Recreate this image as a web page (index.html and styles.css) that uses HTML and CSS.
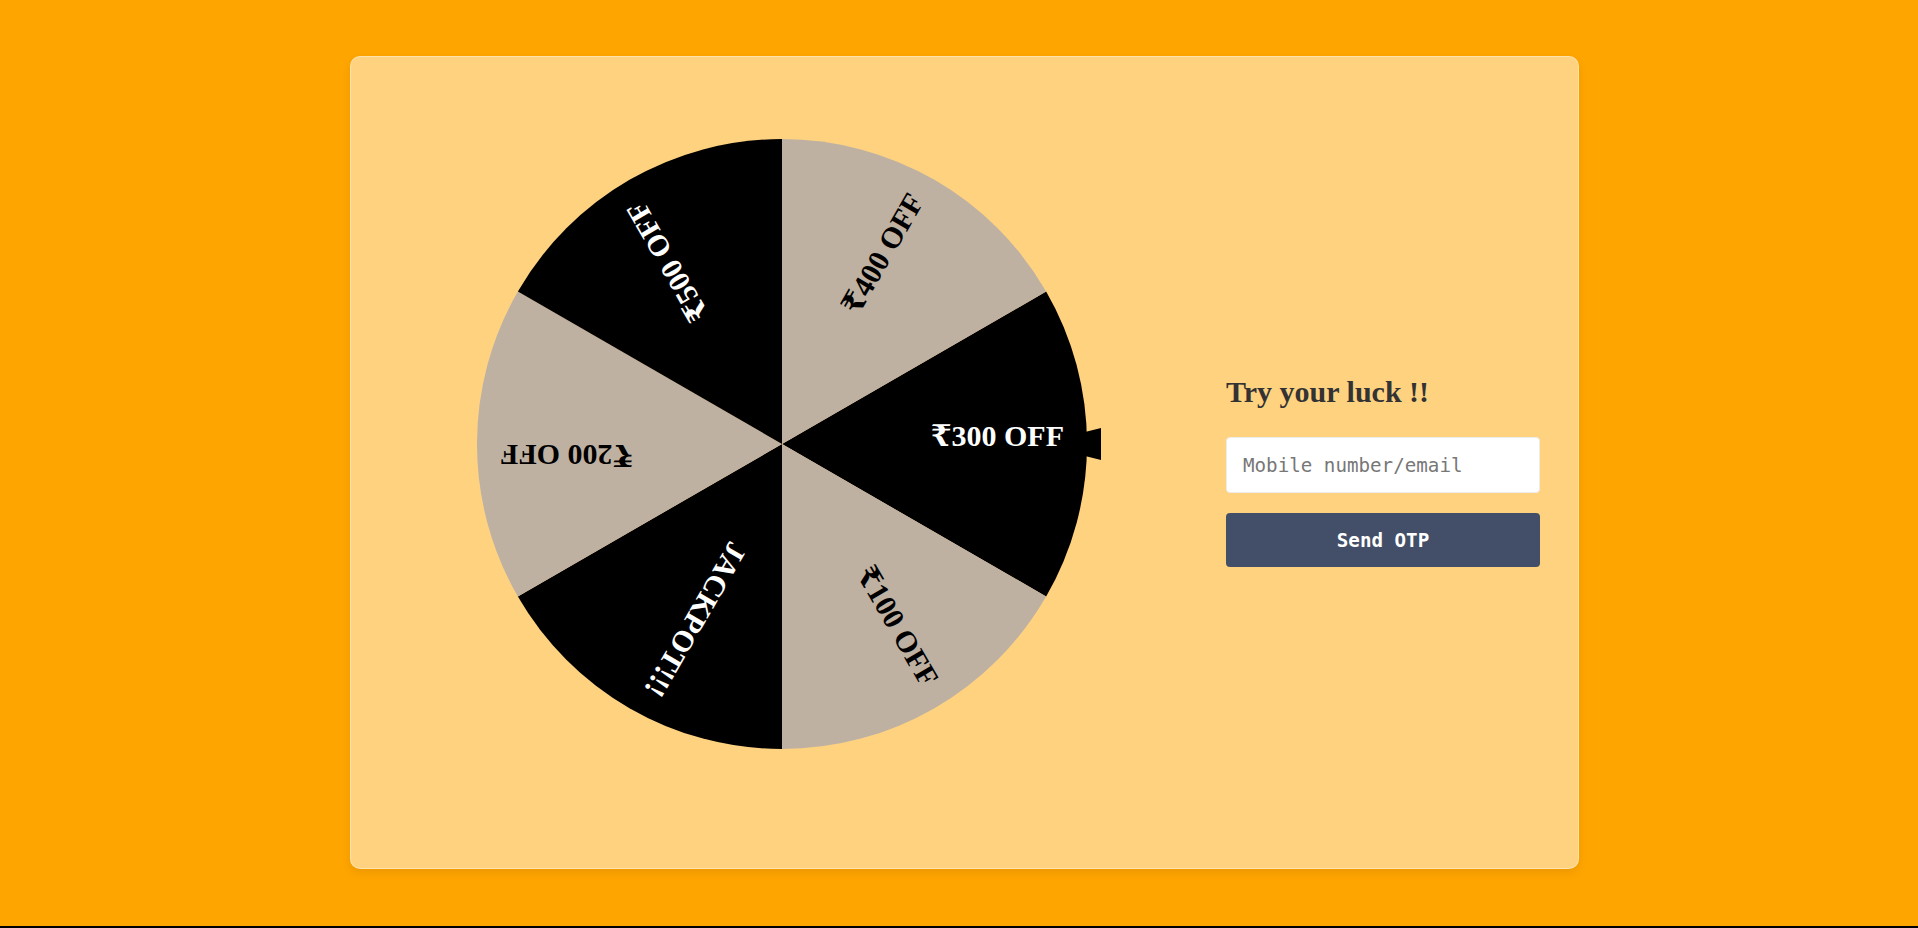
FILE: index.html
```html
<!DOCTYPE html>
<html lang="en">
<head>
<meta charset="utf-8">
<title>Spin the wheel</title>
<link rel="stylesheet" href="styles.css">
</head>
<body>
<main class="card">
  <div class="wheel-wrap">
    <svg class="wheel" width="630" height="610" viewBox="-305 -305 630 610" xmlns="http://www.w3.org/2000/svg">
      <polygon class="pointer" points="255,0 319,-16 319,16"/>
      <g class="segments">
        <path class="seg-dark" d="M0,0 L264.14,-152.5 A305,305 0 0 1 264.14,152.5 Z"/>
        <path class="seg-light" d="M0,0 L264.14,152.5 A305,305 0 0 1 0,305 Z"/>
        <path class="seg-dark" d="M0,0 L0,305 A305,305 0 0 1 -264.14,152.5 Z"/>
        <path class="seg-light" d="M0,0 L-264.14,152.5 A305,305 0 0 1 -264.14,-152.5 Z"/>
        <path class="seg-dark" d="M0,0 L-264.14,-152.5 A305,305 0 0 1 0,-305 Z"/>
        <path class="seg-light" d="M0,0 L0,-305 A305,305 0 0 1 264.14,-152.5 Z"/>
      </g>
      <g class="labels">
        <text class="lbl lbl-light" transform="rotate(0)" x="282" y="2">₹300 OFF</text>
        <text class="lbl lbl-dark" transform="rotate(60)" x="282" y="1">₹100 OFF</text>
        <text class="lbl lbl-light" transform="rotate(120)" x="282" y="-3">JACKPOT!!!</text>
        <text class="lbl lbl-dark" transform="rotate(180)" x="282" y="-1">₹200 OFF</text>
        <text class="lbl lbl-light" transform="rotate(240)" x="282" y="2">₹500 OFF</text>
        <text class="lbl lbl-dark" transform="rotate(300)" x="282" y="2">₹400 OFF</text>
      </g>
    </svg>
  </div>
  <form class="form" onsubmit="return false">
    <h2 class="title">Try your luck !!</h2>
    <input class="field" type="text" placeholder="Mobile number/email">
    <button class="btn" type="submit">Send OTP</button>
  </form>
</main>
</body>
</html>
```

FILE: styles.css
```css
html {
  background: #000;
  margin: 0;
  padding: 0;
}

body {
  margin: 0;
  height: calc(100vh - 2px);
  background: #ffa500;
  overflow: hidden;
  padding-top: 56px;
  box-sizing: border-box;
}

.card {
  box-sizing: border-box;
  width: 1229px;
  height: 813px;
  margin-left: 350px;
  background: rgba(255, 255, 255, 0.5);
  border: 1px solid rgba(255, 255, 255, 0.35);
  border-radius: 10px;
  box-shadow: 0 4px 10px rgba(0, 0, 0, 0.08);
  display: flex;
  align-items: flex-start;
  padding: 82px 38px 0 126px;
}

.wheel-wrap {
  flex: none;
  width: 630px;
  height: 610px;
}

.wheel {
  display: block;
}

.pointer {
  fill: #000;
}

.seg-dark {
  fill: #000;
}

.seg-light {
  fill: #bfb1a2;
}

.lbl {
  font-family: "Liberation Serif", "DejaVu Serif", serif;
  font-weight: bold;
  font-size: 30px;
  text-anchor: end;
}

.lbl-light {
  fill: #fff;
}

.lbl-dark {
  fill: #000;
}

.form {
  margin-left: auto;
  margin-top: 236px;
  width: 314px;
  display: flex;
  flex-direction: column;
}

.title {
  margin: 0;
  font-family: "Liberation Serif", serif;
  font-weight: bold;
  font-size: 30px;
  line-height: 34px;
  color: #333;
}

.field {
  margin-top: 28px;
  box-sizing: border-box;
  height: 56px;
  width: 100%;
  border: 1px solid #ececec;
  border-radius: 4px;
  background: #fff;
  padding: 0 16px;
  font-family: "DejaVu Sans Mono", monospace;
  font-size: 19.2px;
  color: #333;
  outline: none;
}

.field::placeholder {
  color: #777;
}

.btn {
  margin-top: 20px;
  height: 54px;
  width: 100%;
  border: none;
  border-radius: 4px;
  background: #434f68;
  color: #fff;
  font-family: "DejaVu Sans Mono", monospace;
  font-weight: bold;
  font-size: 19.2px;
  cursor: pointer;
}
```
